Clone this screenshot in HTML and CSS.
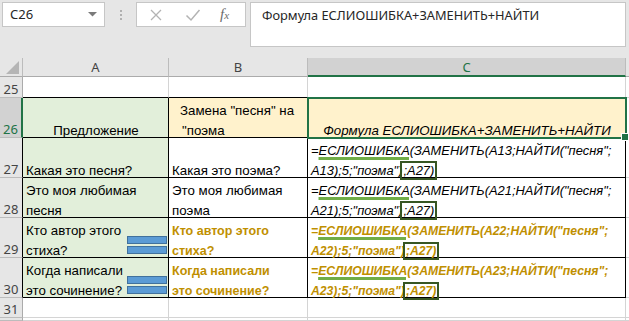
FILE: index.html
```html
<!DOCTYPE html>
<html lang="ru">
<head>
<meta charset="utf-8">
<title>Excel</title>
<link rel="stylesheet" href="styles.css">
</head>
<body>
<div class="app">
  <div class="toolbar">
    <div class="namebox">
      <span class="nb-text">C26</span>
      <svg class="dd" width="9" height="5" viewBox="0 0 9 5"><polygon points="0,0 9,0 4.5,4.5" fill="#7a7a7a"/></svg>
    </div>
    <div class="grip"><i></i><i></i><i></i></div>
    <div class="fxbox">
      <svg class="ico" width="14" height="14" viewBox="0 0 14 14"><path d="M2 2 L12 12 M12 2 L2 12" stroke="#b3b3b3" stroke-width="1.3" fill="none"/></svg>
      <svg class="ico" width="16" height="14" viewBox="0 0 16 14"><path d="M1.5 7.5 L6 12 L14.5 2" stroke="#b3b3b3" stroke-width="1.5" fill="none"/></svg>
      <span class="fx">f<span class="fx-x">x</span></span>
    </div>
    <div class="formula">Формула ЕСЛИОШИБКА+ЗАМЕНИТЬ+НАЙТИ</div>
  </div>

  <div class="sheet">
    <!-- header row -->
    <div class="h corner"><svg width="13" height="13" viewBox="0 0 13 13"><polygon points="13,0 13,13 0,13" fill="#b5b5b5"/></svg></div>
    <div class="h colh">A</div>
    <div class="h colh">B</div>
    <div class="h colh sel-col">C</div>
    <div class="h colh rest"></div>

    <!-- row 25 -->
    <div class="h rowh">25</div>
    <div class="c tb"></div>
    <div class="c tb"></div>
    <div class="c"></div>
    <div class="c"></div>

    <!-- row 26 -->
    <div class="h rowh sel-row">26</div>
    <div class="c t green center"><div class="v">Предложение</div></div>
    <div class="c t yellow wrap-b"><div class="v"><span class="ln">Замена "песня" на</span><span class="ln l2">"поэма</span></div></div>
    <div class="c t yellow center ital selected"><div class="v">Формула ЕСЛИОШИБКА+ЗАМЕНИТЬ+НАЙТИ</div></div>
    <div class="c"></div>

    <!-- row 27 -->
    <div class="h rowh tr">27</div>
    <div class="c t green"><div class="v">Какая это песня?</div></div>
    <div class="c t"><div class="v">Какая это поэма?</div></div>
    <div class="c t ital f"><div class="v"><span class="ln">=<span class="err">ЕСЛИОШИБКА(</span>ЗАМЕНИТЬ(A13;НАЙТИ("песня";</span><span class="ln">A13);5;"поэма")<span class="ref">;A27)</span></span></div></div>
    <div class="c"></div>

    <!-- row 28 -->
    <div class="h rowh tr">28</div>
    <div class="c t green"><div class="v"><span class="ln">Это моя любимая</span><span class="ln">песня</span></div></div>
    <div class="c t"><div class="v"><span class="ln">Это моя любимая</span><span class="ln">поэма</span></div></div>
    <div class="c t ital f"><div class="v"><span class="ln">=<span class="err">ЕСЛИОШИБКА(</span>ЗАМЕНИТЬ(A21;НАЙТИ("песня";</span><span class="ln">A21);5;"поэма")<span class="ref">;A27)</span></span></div></div>
    <div class="c"></div>

    <!-- row 29 -->
    <div class="h rowh tr">29</div>
    <div class="c t green shape-cell"><div class="v"><span class="ln">Кто автор этого</span><span class="ln">стиха?</span></div><div class="bars"><i></i><i></i></div></div>
    <div class="c t gold"><div class="v"><span class="ln">Кто автор этого</span><span class="ln">стиха?</span></div></div>
    <div class="c t ital f gold"><div class="v"><span class="ln">=<span class="err">ЕСЛИОШИБКА(</span>ЗАМЕНИТЬ(A22;НАЙТИ("песня";</span><span class="ln">A22);5;"поэма")<span class="ref">;A27)</span></span></div></div>
    <div class="c"></div>

    <!-- row 30 -->
    <div class="h rowh tr">30</div>
    <div class="c t green shape-cell"><div class="v"><span class="ln">Когда написали</span><span class="ln">это сочинение?</span></div><div class="bars"><i></i><i></i></div></div>
    <div class="c t gold"><div class="v"><span class="ln">Когда написали</span><span class="ln">это сочинение?</span></div></div>
    <div class="c t ital f gold"><div class="v"><span class="ln">=<span class="err">ЕСЛИОШИБКА(</span>ЗАМЕНИТЬ(A23;НАЙТИ("песня";</span><span class="ln">A23);5;"поэма")<span class="ref">;A27)</span></span></div></div>
    <div class="c"></div>

    <!-- row 31 -->
    <div class="h rowh">31</div>
    <div class="c"></div>
    <div class="c"></div>
    <div class="c"></div>
    <div class="c"></div>

    <!-- row 32 -->
    <div class="h rowh"></div>
    <div class="c"></div>
    <div class="c"></div>
    <div class="c"></div>
    <div class="c"></div>
  </div>
</div>
</body>
</html>
```

FILE: styles.css
```css
* { box-sizing: border-box; }
html, body { margin: 0; padding: 0; }
body {
  width: 629px;
  height: 321px;
  overflow: hidden;
  background: #e6e6e6;
  font-family: "Liberation Sans", Arial, sans-serif;
}
.app { display: flex; flex-direction: column; height: 321px; }

/* ---------- toolbar ---------- */
.toolbar {
  height: 58px;
  display: flex;
  align-items: flex-start;
  padding: 2px 3px 0 2px;
  background: #e6e6e6;
  font-family: "Noto Sans", "Open Sans", sans-serif;
}
.namebox {
  width: 103px;
  height: 25px;
  background: #fff;
  border: 1px solid #c6c6c6;
  display: flex;
  align-items: center;
  justify-content: space-between;
  padding: 0 7px 1px 7px;
  font-size: 13px;
  color: #262626;
}
.dd { margin-top: 1px; }
.grip {
  width: 31px;
  height: 25px;
  display: flex;
  flex-direction: column;
  align-items: center;
  justify-content: center;
  gap: 2px;
}
.grip i { display: block; width: 2px; height: 2px; background: #b0b0b0; }
.fxbox {
  width: 110px;
  height: 25px;
  background: #fff;
  border: 1px solid #c6c6c6;
  display: flex;
  align-items: center;
  padding: 0 0 0 12px;
  gap: 22px;
}
.ico { display: block; }
.fx {
  font-family: "Liberation Serif", "DejaVu Serif", serif;
  font-style: italic;
  font-size: 15px;
  color: #6b6b6b;
  margin-left: -3px;
  line-height: 1;
}
.fx-x { font-size: 11px; }
.formula {
  flex: 1;
  margin-left: 4px;
  height: 45px;
  background: #fff;
  border: 1px solid #c6c6c6;
  padding: 2px 0 0 11px;
  font-size: 12.8px;
  color: #262626;
  line-height: 20px;
}

/* ---------- sheet ---------- */
.sheet {
  flex: 1;
  display: grid;
  grid-template-columns: 23px 146px 139px 318px 1fr;
  grid-template-rows: 19px 21px 40px 40px 40px 40px 40px 20px 1fr;
  background: #fff;
  font-size: 13.3px;
  color: #000;
}
.h {
  background: #e6e6e6;
  color: #444;
  font-family: "Noto Sans", "Open Sans", sans-serif;
  font-size: 13px;
  border-right: 1px solid #bcbcbc;
  border-bottom: 1px solid #bcbcbc;
  display: flex;
  align-items: center;
  justify-content: center;
}
.corner { justify-content: flex-end; align-items: flex-end; padding: 0 3px 2px 0; border-bottom-color: #ababab; }
.colh { border-bottom-color: #ababab; line-height: 1; padding-top: 1px; }
.colh.rest { border-right: none; }
.sel-col { background: #d2d2d2; color: #217346; border-bottom: 2px solid #217346; }
.rowh { border-right-color: #ababab; border-bottom-color: #bcbcbc; line-height: 1; align-items: flex-end; padding-bottom: 1px; }
.rowh.tr { border-right-color: #000; }
.sel-row { background: #d2d2d2; color: #217346; border-right: 2px solid #217346; }

.c {
  border-right: 1px solid #d4d4d4;
  border-bottom: 1px solid #d4d4d4;
  display: flex;
  flex-direction: column;
  justify-content: flex-end;
  padding: 0 2px 0 3px;
  line-height: 20px;
  white-space: nowrap;
}
.v {
  display: flex;
  flex-direction: column;
  margin-bottom: -4px;
}
.ln { display: block; }
.c.tb { border-bottom-color: #000; }
.c.t { border-right-color: #000; border-bottom-color: #000; }
.green { background: #e2efda; }
.yellow { background: #fff2cc; }
.center { align-items: center; }
.wrap-b { padding-left: 11px; }
.wrap-b .l2 { padding-left: 2px; }
.ital { font-style: italic; }
.gold { color: #bf8f00; font-weight: bold; font-size: 12.5px; }
.f { font-size: 12.9px; }
.f.gold { font-size: 12.2px; }

.selected {
  position: relative;
  outline: 2px solid #217346;
  outline-offset: -1px;
  z-index: 2;
}
.selected::after {
  content: "";
  position: absolute;
  right: -4px;
  bottom: -4px;
  width: 6px;
  height: 6px;
  background: #217346;
  border: 1px solid #fff;
}

.err {
  text-decoration: underline;
  text-decoration-color: #70ad47;
  text-decoration-thickness: 3px;
  text-underline-offset: 2px;
}
.ref {
  outline: 2px solid #375623;
  outline-offset: 0px;
  padding: 0 1px;
}

.shape-cell { position: relative; }
.bars {
  position: absolute;
  right: 1px;
  top: 18px;
  display: flex;
  flex-direction: column;
  gap: 2px;
}
.bars i {
  display: block;
  width: 40px;
  height: 8px;
  background: #5b9bd5;
  border: 1px solid #41719c;
}
```
